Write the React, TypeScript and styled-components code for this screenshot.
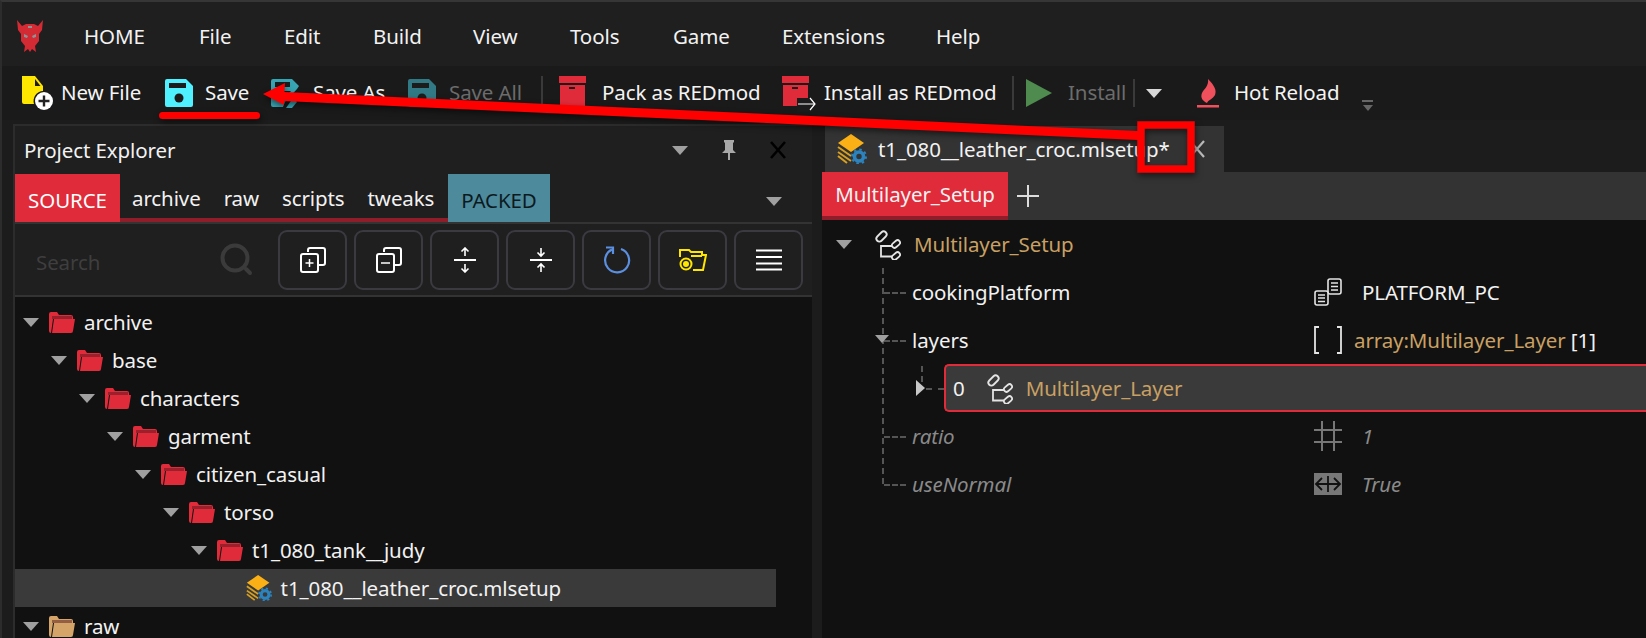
import styled, { createGlobalStyle } from 'styled-components';

const GlobalStyle = createGlobalStyle`
  html, body {
    margin: 0;
    padding: 0;
    background: #1c1c1c;
    overflow: hidden;
  }
  * {
    box-sizing: border-box;
  }
`;

const RED = '#e02b3a';
const TAN = '#c9a063';

const DevilLogo = () => (
  <svg width="28" height="34" viewBox="0 0 28 34">
    <path
      fill="#d42a33"
      d="M1 1 L6 7 L10 5 L18 5 L22 7 L27 1 L26 11 L23 15 L23 22 L19 27 L20 33 L16 30 L14 33 L12 30 L8 33 L9 27 L5 22 L5 15 L2 11 Z"
    />
    <path fill="#8c9498" d="M8 15 L12 17 L11 19 L8 18 Z M20 15 L16 17 L17 19 L20 18 Z M12 7 h4 v2 h-4 Z" />
  </svg>
);

const NewFileIcon = () => (
  <svg width="32" height="34" viewBox="0 0 32 34">
    <path fill="#ffe600" d="M1 0 H14 L22 10 V15 A10 10 0 0 0 13 28 H3 Q1 28 1 26 Z" />
    <path fill="#1c1c1c" d="M14 3 L19.5 10 H14 Z" />
    <circle cx="23" cy="25" r="9" fill="#fff" />
    <path stroke="#222" strokeWidth="2.4" d="M23 19.5 V30.5 M17.5 25 H28.5" />
  </svg>
);

const SaveIcon = ({ dim = false }: { dim?: boolean }) => (
  <svg width="28" height="28" viewBox="0 0 28 28">
    <path fill={dim ? '#317a85' : '#4ff0ff'} d="M2 0 H21 L28 7 V26 Q28 28 26 28 H2 Q0 28 0 26 V2 Q0 0 2 0 Z" />
    <rect x="4" y="4" width="17" height="5" fill="#1c1c1c" />
    <circle cx="14" cy="19" r="4.5" fill="#1c1c1c" />
  </svg>
);

const SaveAsIcon = () => (
  <svg width="28" height="30" viewBox="0 0 28 30">
    <path fill="#37a5b3" d="M2 1 H21 L28 8 L26 11 L14 24 L12 29 H2 Q0 29 0 27 V3 Q0 1 2 1 Z" />
    <rect x="4" y="4" width="15" height="5" fill="#1c1c1c" />
    <path fill="#1c1c1c" d="M5 13 H20 L11 23 H5 Z" />
    <path fill="#37a5b3" d="M22 20 L26 24 L21 30 L15 30 Z" />
  </svg>
);

const BoxIcon = ({ arrow = false }: { arrow?: boolean }) => (
  <svg width="30" height="34" viewBox="0 0 30 34" overflow="visible">
    <rect x="1" y="0" width="27" height="7" fill={RED} />
    <rect x="2" y="9" width="25" height="21" fill={RED} />
    <rect x="11" y="11" width="6" height="2" fill="#1c1c1c" />
    {arrow && (
      <>
        <path fill="#1c1c1c" d="M16 22 H32 V36 H16 Z" />
        <path stroke="#fff" strokeWidth="1.2" fill="none" d="M17 28 H34 M29 22 L34 28 L29 34" />
      </>
    )}
  </svg>
);

const PlayIcon = () => (
  <svg width="26" height="28" viewBox="0 0 26 28">
    <path fill="#4f8a4f" d="M0 0 L26 14 L0 28 Z" />
  </svg>
);

const FlameIcon = () => (
  <svg width="22" height="30" viewBox="0 0 22 30">
    <path fill="#f0505c" d="M11 1 C17 7 20 12 18 17 C16 21 11 22 10 25 C6 23 3 20 5 15 C7 11 12 8 11 1 Z" />
    <rect x="0" y="27" width="22" height="2.5" fill="#f0505c" />
  </svg>
);

const Caret = styled.span<{ $size?: number; $color?: string }>`
  display: inline-block;
  width: 0;
  height: 0;
  border-left: ${(p) => p.$size ?? 8}px solid transparent;
  border-right: ${(p) => p.$size ?? 8}px solid transparent;
  border-top: ${(p) => (p.$size ?? 8) * 1.2}px solid ${(p) => p.$color ?? '#a0a0a0'};
  flex: none;
`;

const PinIcon = () => (
  <svg width="16" height="20" viewBox="0 0 16 20">
    <path fill="#a8a8a8" d="M3 0 H13 V2 L12 3 V10 L15 13 H9 V20 H7 V13 H1 L4 10 V3 L3 2 Z" />
  </svg>
);

const CrossIcon = ({ color, weight = 2.2 }: { color: string; weight?: number }) => (
  <svg width="16" height="18" viewBox="0 0 16 18">
    <path stroke={color} strokeWidth={weight} d="M1 1 L15 17 M15 1 L1 17" />
  </svg>
);

const MagnifierIcon = () => (
  <svg width="34" height="34" viewBox="0 0 34 34">
    <circle cx="15" cy="15" r="12.5" fill="none" stroke="#3b3b3b" strokeWidth="4" />
    <path stroke="#3b3b3b" strokeWidth="4" strokeLinecap="round" d="M26 26 L30 30" />
  </svg>
);

const StackIcon = ({ minus = false }: { minus?: boolean }) => (
  <svg width="26" height="26" viewBox="0 0 26 26" fill="none" stroke="#fff" strokeWidth="2">
    <path d="M8 5 V3 Q8 1 10 1 H23 Q25 1 25 3 V16 Q25 18 23 18 H19" />
    <rect x="1" y="7" width="17" height="18" rx="2" />
    <path strokeWidth="1.5" d={minus ? 'M5 16 H14' : 'M5.5 16 H13.5 M9.5 12 V20'} />
  </svg>
);

const SpreadIcon = ({ inward = false }: { inward?: boolean }) => (
  <svg width="24" height="26" viewBox="0 0 24 26" fill="none" stroke="#fff" strokeWidth="1.6">
    <path strokeWidth="2" d="M1 13 H23" />
    {inward ? (
      <path d="M12 1 V9 M8.5 5.5 L12 9 L15.5 5.5 M12 25 V17 M8.5 20.5 L12 17 L15.5 20.5" />
    ) : (
      <path d="M12 9 V1 M8.5 4.5 L12 1 L15.5 4.5 M12 17 V25 M8.5 21.5 L12 25 L15.5 21.5" />
    )}
  </svg>
);

const RefreshIcon = () => (
  <svg width="28" height="28" viewBox="0 0 28 28" fill="none" stroke="#5b8fe0" strokeWidth="2.2">
    <path d="M9 3.5 A12 12 0 1 0 18 3" />
    <path d="M3 1.5 H10 V8" />
  </svg>
);

const FolderCamIcon = () => (
  <svg width="28" height="24" viewBox="0 0 28 24" fill="none" stroke="#ffe600" strokeWidth="2">
    <path d="M1 9 V2 H10 L12 4 H23 V7 H27 L24 22 H14" />
    <path d="M12 8 H23" />
    <circle cx="7" cy="16" r="5.5" />
    <circle cx="7" cy="16" r="2" fill="#ffe600" />
  </svg>
);

const MenuLinesIcon = () => (
  <svg width="26" height="22" viewBox="0 0 26 22" fill="none" stroke="#fff" strokeWidth="2.2">
    <path d="M0 1.5 H26 M0 8 H26 M0 14.5 H26 M0 20.5 H26" />
  </svg>
);

const FolderIcon = ({ color }: { color: string }) => (
  <svg width="26" height="21" viewBox="0 0 26 21">
    <path fill={color} d="M2 0 H8 L10 3 H22 Q24 3 24 5 V7 H4 L2 21 Q0 21 0 19 V2 Q0 0 2 0 Z" />
    <path fill="#55161b" opacity="0.5" d="M3 4 H23 V7 H3 Z" />
    <path fill={color} d="M5 7 H26 L24 19 Q24 21 22 21 H3 Z" />
  </svg>
);

const MlsetupIcon = ({ size = 30 }: { size?: number }) => (
  <svg width={size} height={size} viewBox="0 0 30 30">
    <path fill="#fbb116" d="M14 0 L27 9 L14 18 L1 9 Z" />
    <path fill="none" stroke="#d9a01f" strokeWidth="2" d="M1 13 L14 22 M1 18 L14 27 M1 22 L10 29" />
    <circle cx="22" cy="22.500" r="4.500" fill="none" stroke="#2c83bd" strokeWidth="3.600" />
    <circle cx="22" cy="22.500" r="7" fill="none" stroke="#2c83bd" strokeWidth="2" strokeDasharray="2.500 3" />
  </svg>
);

const StructIcon = () => (
  <svg width="28" height="32" viewBox="0 0 28 32" fill="none" stroke="#e4e4e4" strokeWidth="1.8">
    <rect x="2.500" y="5.500" width="12" height="6" rx="3" transform="rotate(-45 8.500 8.500)" />
    <rect x="18.500" y="13.500" width="9" height="5" rx="2.500" transform="rotate(-40 23 16)" />
    <rect x="18.500" y="25.500" width="9" height="5" rx="2.500" transform="rotate(-40 23 28)" />
    <path d="M19 18 H8 V28.500 H19" />
  </svg>
);

const EnumIcon = () => (
  <svg width="28" height="28" viewBox="0 0 28 28" fill="none" stroke="#e4e4e4" strokeWidth="1.6">
    <rect x="14" y="1" width="13" height="15" rx="2" />
    <path d="M17 5 H24 M17 8.5 H24 M17 12 H24" />
    <rect x="1" y="13" width="13" height="14" rx="2" fill="#111" />
    <path d="M4 17 H11 M4 20 H11 M4 23.5 H11" />
  </svg>
);

const BracketsIcon = () => (
  <svg width="28" height="28" viewBox="0 0 28 28" fill="none" stroke="#e4e4e4" strokeWidth="1.8">
    <path d="M5 1 H1 V27 H5 M23 1 H27 V27 H23" />
  </svg>
);

const HashIcon = () => (
  <svg width="28" height="30" viewBox="0 0 28 30" fill="none" stroke="#777" strokeWidth="2">
    <path d="M8 0 V30 M20 0 V30 M0 9 H28 M0 21 H28" />
  </svg>
);

const BoolIcon = () => (
  <svg width="28" height="22" viewBox="0 0 28 22">
    <rect width="28" height="22" fill="#777" />
    <path fill="none" stroke="#111" strokeWidth="1.8" d="M2 11 H26 M8 5 L2 11 L8 17 M20 5 L26 11 L20 17 M14 3 V19" />
  </svg>
);

const Window = styled.div`
  position: relative;
  width: 1646px;
  height: 638px;
  display: flex;
  flex-direction: column;
  overflow: hidden;
  background: #1c1c1c;
  border-top: 2px solid #363636;
  border-left: 2px solid #2c2c2c;
  color: #f2f2f2;
  font-family: 'Noto Sans', 'Open Sans', sans-serif;
  font-size: 20.5px;
  letter-spacing: -0.1px;
`;

const MenuBar = styled.div`
  height: 64px;
  flex: none;
  display: flex;
  align-items: center;
  padding-left: 14px;
  padding-top: 3px;
  background: #1f1f1f;
`;

const LogoSlot = styled.div`
  width: 68px;
  display: flex;
`;

const MenuItem = styled.div<{ $w: number }>`
  width: ${(p) => p.$w}px;
  white-space: nowrap;
`;

const ToolBar = styled.div`
  height: 54px;
  flex: none;
  display: flex;
  align-items: center;
  padding-left: 19px;
  background: #1a1a1a;
`;

const ToolItem = styled.div<{ $w: number; $gap: number; $dim?: boolean; $ml?: number }>`
  width: ${(p) => p.$w}px;
  margin-left: ${(p) => p.$ml ?? 0}px;
  flex: none;
  display: flex;
  align-items: center;
  gap: ${(p) => p.$gap}px;
  white-space: nowrap;
  color: ${(p) => (p.$dim ? '#6c6c6c' : '#f4f4f4')};
`;

const ToolLabel = styled.span`
  position: relative;
  top: -1px;
`;

const ToolSep = styled.div<{ $h?: number; $mr: number }>`
  width: 2px;
  height: ${(p) => p.$h ?? 34}px;
  background: #3a3a3a;
  flex: none;
  margin-right: ${(p) => p.$mr}px;
`;

const Overflow = styled.div`
  display: flex;
  flex-direction: column;
  align-items: center;
  gap: 3px;
  margin-top: 24px;
  &::before {
    content: '';
    width: 11px;
    height: 2px;
    background: #666;
  }
`;

const Main = styled.div`
  flex: 1;
  min-height: 0;
  display: flex;
  padding-top: 4px;
`;

const LeftPanel = styled.div`
  width: 799px;
  margin-left: 11px;
  flex: none;
  display: flex;
  flex-direction: column;
  background: #1f1f1f;
  border-top: 2px solid #2c2c2c;
  border-left: 2px solid #2c2c2c;
`;

const PanelHeader = styled.div`
  height: 48px;
  flex: none;
  display: flex;
  align-items: center;
  padding: 0 26px 0 9px;
`;

const PanelTitle = styled.div`
  flex: 1;
`;

const HeaderTools = styled.div`
  display: flex;
  align-items: center;
  gap: 33px;
`;

const TabStrip = styled.div`
  height: 48px;
  flex: none;
  display: flex;
  align-items: stretch;
  position: relative;
  padding-right: 30px;
`;

const KindTab = styled.div<{ $bg: string; $color: string; $w: number }>`
  width: ${(p) => p.$w}px;
  display: flex;
  align-items: center;
  justify-content: center;
  padding-top: 3px;
  background: ${(p) => p.$bg};
  color: ${(p) => p.$color};
`;

const SubTabs = styled.div`
  width: 328px;
  display: flex;
  align-items: center;
  gap: 23px;
  padding: 3px 0 0 12px;
  border-bottom: 4px solid #8f1d2a;
`;

const StripCaret = styled.div`
  margin-left: auto;
  align-self: center;
`;

const SearchRow = styled.div`
  height: 75px;
  flex: none;
  display: flex;
  align-items: center;
  gap: 7px;
  padding-left: 21px;
  border-top: 2px solid #333;
  border-bottom: 2px solid #333;
`;

const SearchBox = styled.div`
  width: 235px;
  display: flex;
  align-items: center;
  justify-content: space-between;
  padding-right: 17px;
  color: #3e3e3e;
`;

const SearchHint = styled.span`
  position: relative;
  top: 2px;
`;

const ToolButton = styled.div`
  width: 69px;
  height: 60px;
  flex: none;
  display: flex;
  align-items: center;
  justify-content: center;
  border: 2px solid #3a3a40;
  border-radius: 9px;
`;

const Tree = styled.div`
  flex: 1;
  min-height: 0;
  overflow: hidden;
  background: #111;
  padding-top: 6px;
`;

const TreeRow = styled.div<{ $depth: number; $selected?: boolean }>`
  height: 38px;
  width: 761px;
  display: flex;
  align-items: center;
  gap: 9px;
  padding-left: ${(p) => 8 + p.$depth * 28}px;
  background: ${(p) => (p.$selected ? '#3a3a3a' : 'transparent')};
  white-space: nowrap;
  line-height: 1;
`;

const RowCaret = styled.div`
  display: flex;
  margin-right: 1px;
`;

const RightPanel = styled.div`
  flex: 1;
  min-width: 0;
  margin-left: 10px;
  display: flex;
  flex-direction: column;
`;

const DocTabs = styled.div`
  height: 48px;
  flex: none;
  display: flex;
  align-items: flex-end;
  padding-left: 3px;
`;

const DocTab = styled.div`
  width: 399px;
  height: 46px;
  display: flex;
  align-items: center;
  gap: 11px;
  padding-left: 12px;
  background: #333;
  white-space: nowrap;
`;

const DocClose = styled.div`
  margin-left: 8px;
  display: flex;
`;

const SubBar = styled.div`
  height: 48px;
  flex: none;
  display: flex;
  background: #333;
`;

const SubTab = styled.div`
  width: 186px;
  display: flex;
  align-items: center;
  justify-content: center;
  background: ${RED};
  border-bottom: 4px solid #8f1d2a;
`;

const PlusIcon = styled.div`
  width: 22px;
  height: 22px;
  margin: 13px 0 0 9px;
  background:
    linear-gradient(#ddd, #ddd) center / 100% 2px no-repeat,
    linear-gradient(#ddd, #ddd) center / 2px 100% no-repeat;
`;

const PropGrid = styled.div`
  flex: 1;
  position: relative;
  background: #111;
`;

const PropRow = styled.div`
  height: 48px;
  display: grid;
  grid-template-columns: 492px 1fr;
  align-items: center;
`;

const NameCell = styled.div<{ $pad: number; $muted?: boolean }>`
  display: flex;
  align-items: center;
  gap: 13px;
  padding-left: ${(p) => p.$pad}px;
  font-style: ${(p) => (p.$muted ? 'italic' : 'normal')};
  color: ${(p) => (p.$muted ? '#8a8a8a' : '#f2f2f2')};
`;

const ValueCell = styled.div<{ $muted?: boolean; $gap?: number }>`
  display: flex;
  align-items: center;
  gap: ${(p) => p.$gap ?? 20}px;
  font-style: ${(p) => (p.$muted ? 'italic' : 'normal')};
  color: ${(p) => (p.$muted ? '#8a8a8a' : '#f2f2f2')};
`;

const Tan = styled.span`
  color: ${TAN};
`;

const ChildRow = styled.div`
  position: relative;
  height: 48px;
  margin-left: 122px;
  display: flex;
  align-items: center;
  gap: 20px;
  padding-left: 7px;
  background: #3a3a3a;
  border: 2px solid ${RED};
  border-right: 0;
  border-radius: 5px 0 0 5px;
`;

const ChildLabel = styled.div`
  display: flex;
  align-items: center;
  gap: 13px;
`;

const DotsV = styled.div<{ $h: number; $left: number; $top: number }>`
  position: absolute;
  left: ${(p) => p.$left}px;
  top: ${(p) => p.$top}px;
  height: ${(p) => p.$h}px;
  border-left: 2px dashed #555;
`;

const DotsH = styled.div<{ $w: number; $left: number; $top: number }>`
  position: absolute;
  left: ${(p) => p.$left}px;
  top: ${(p) => p.$top}px;
  width: ${(p) => p.$w}px;
  border-top: 2px dashed #555;
`;

const SideCaret = styled.div`
  position: absolute;
  left: 94px;
  top: 160px;
  width: 0;
  height: 0;
  border-top: 8px solid transparent;
  border-bottom: 8px solid transparent;
  border-left: 9px solid #c8c8c8;
`;

const DownCaret = styled.div`
  position: absolute;
  display: flex;
  left: 53px;
  top: 115px;
`;

const RootCaret = styled.div`
  display: flex;
  margin-right: 8px;
`;

const Annotation = styled.svg`
  position: absolute;
  left: -2px;
  top: -2px;
  pointer-events: none;
  filter: drop-shadow(1px 3px 3px rgba(0, 0, 0, 0.55));
`;

const treeFolders = [
  { name: 'archive', depth: 0 },
  { name: 'base', depth: 1 },
  { name: 'characters', depth: 2 },
  { name: 'garment', depth: 3 },
  { name: 'citizen_casual', depth: 4 },
  { name: 'torso', depth: 5 },
  { name: 't1_080_tank__judy', depth: 6 },
];

const App = () => {
  return (
    <>
      <GlobalStyle />
      <Window>
        <MenuBar>
          <LogoSlot>
            <DevilLogo />
          </LogoSlot>
          <MenuItem $w={115}>HOME</MenuItem>
          <MenuItem $w={85}>File</MenuItem>
          <MenuItem $w={89}>Edit</MenuItem>
          <MenuItem $w={100}>Build</MenuItem>
          <MenuItem $w={97}>View</MenuItem>
          <MenuItem $w={103}>Tools</MenuItem>
          <MenuItem $w={109}>Game</MenuItem>
          <MenuItem $w={154}>Extensions</MenuItem>
          <MenuItem $w={60}>Help</MenuItem>
        </MenuBar>
        <ToolBar>
          <ToolItem $w={144} $gap={8}>
            <NewFileIcon />
            <ToolLabel>New File</ToolLabel>
          </ToolItem>
          <ToolItem $w={106} $gap={12}>
            <SaveIcon />
            <ToolLabel>Save</ToolLabel>
          </ToolItem>
          <ToolItem $w={137} $gap={14}>
            <SaveAsIcon />
            <ToolLabel>Save As</ToolLabel>
          </ToolItem>
          <ToolItem $w={133} $gap={13} $dim>
            <SaveIcon dim />
            <ToolLabel>Save All</ToolLabel>
          </ToolItem>
          <ToolSep $mr={15} />
          <ToolItem $w={223} $gap={14}>
            <BoxIcon />
            <ToolLabel>Pack as REDmod</ToolLabel>
          </ToolItem>
          <ToolItem $w={231} $gap={13}>
            <BoxIcon arrow />
            <ToolLabel>Install as REDmod</ToolLabel>
          </ToolItem>
          <ToolSep $mr={12} />
          <ToolItem $w={107} $gap={16} $dim>
            <PlayIcon />
            <ToolLabel>Install</ToolLabel>
          </ToolItem>
          <ToolSep $h={28} $mr={11} />
          <Caret $size={8} $color="#d8d8d8" />
          <ToolItem $w={165} $gap={15} $ml={35}>
            <FlameIcon />
            <ToolLabel>Hot Reload</ToolLabel>
          </ToolItem>
          <Overflow>
            <Caret $size={5.5} $color="#666" />
          </Overflow>
        </ToolBar>
        <Main>
          <LeftPanel>
            <PanelHeader>
              <PanelTitle>Project Explorer</PanelTitle>
              <HeaderTools>
                <Caret $size={8} />
                <PinIcon />
                <CrossIcon color="#000" weight={2.6} />
              </HeaderTools>
            </PanelHeader>
            <TabStrip>
              <KindTab $bg={RED} $color="#fff" $w={105}>
                SOURCE
              </KindTab>
              <SubTabs>
                <span>archive</span>
                <span>raw</span>
                <span>scripts</span>
                <span>tweaks</span>
              </SubTabs>
              <KindTab $bg="#4d8a9c" $color="#0c1a1e" $w={102}>
                PACKED
              </KindTab>
              <StripCaret>
                <Caret $size={8} />
              </StripCaret>
            </TabStrip>
            <SearchRow>
              <SearchBox>
                <SearchHint>Search</SearchHint>
                <MagnifierIcon />
              </SearchBox>
              <ToolButton>
                <StackIcon />
              </ToolButton>
              <ToolButton>
                <StackIcon minus />
              </ToolButton>
              <ToolButton>
                <SpreadIcon />
              </ToolButton>
              <ToolButton>
                <SpreadIcon inward />
              </ToolButton>
              <ToolButton>
                <RefreshIcon />
              </ToolButton>
              <ToolButton>
                <FolderCamIcon />
              </ToolButton>
              <ToolButton>
                <MenuLinesIcon />
              </ToolButton>
            </SearchRow>
            <Tree>
              {treeFolders.map((f) => (
                <TreeRow key={f.name} $depth={f.depth}>
                  <RowCaret>
                    <Caret $size={8} />
                  </RowCaret>
                  <FolderIcon color={RED} />
                  {f.name}
                </TreeRow>
              ))}
              <TreeRow $depth={7.95} $selected>
                <MlsetupIcon size={26} />
                t1_080__leather_croc.mlsetup
              </TreeRow>
              <TreeRow $depth={0}>
                <RowCaret>
                  <Caret $size={8} />
                </RowCaret>
                <FolderIcon color="#d5a468" />
                raw
              </TreeRow>
            </Tree>
          </LeftPanel>
          <RightPanel>
            <DocTabs>
              <DocTab>
                <MlsetupIcon />
                t1_080__leather_croc.mlsetup*
                <DocClose>
                  <CrossIcon color="#bbb" />
                </DocClose>
              </DocTab>
            </DocTabs>
            <SubBar>
              <SubTab>Multilayer_Setup</SubTab>
              <PlusIcon />
            </SubBar>
            <PropGrid>
              <DotsV $left={60} $top={48} $h={216} />
              <DotsH $left={62} $top={72} $w={22} />
              <DotsH $left={62} $top={120} $w={22} />
              <DotsH $left={62} $top={216} $w={22} />
              <DotsH $left={62} $top={264} $w={22} />
              <DotsV $left={99} $top={146} $h={16} />
              <DotsH $left={104} $top={168} $w={18} />
              <DownCaret>
                <Caret $size={7} />
              </DownCaret>
              <SideCaret />
              <PropRow>
                <NameCell $pad={14}>
                  <RootCaret>
                    <Caret $size={8} />
                  </RootCaret>
                  <StructIcon />
                  <Tan>Multilayer_Setup</Tan>
                </NameCell>
              </PropRow>
              <PropRow>
                <NameCell $pad={90}>cookingPlatform</NameCell>
                <ValueCell>
                  <EnumIcon />
                  PLATFORM_PC
                </ValueCell>
              </PropRow>
              <PropRow>
                <NameCell $pad={90}>layers</NameCell>
                <ValueCell $gap={12}>
                  <BracketsIcon />
                  <span>
                    <Tan>array:Multilayer_Layer</Tan> [1]
                  </span>
                </ValueCell>
              </PropRow>
              <ChildRow>
                0
                <ChildLabel>
                  <StructIcon />
                  <Tan>Multilayer_Layer</Tan>
                </ChildLabel>
              </ChildRow>
              <PropRow>
                <NameCell $pad={90} $muted>
                  ratio
                </NameCell>
                <ValueCell $muted>
                  <HashIcon />1
                </ValueCell>
              </PropRow>
              <PropRow>
                <NameCell $pad={90} $muted>
                  useNormal
                </NameCell>
                <ValueCell $muted>
                  <BoolIcon />
                  True
                </ValueCell>
              </PropRow>
            </PropGrid>
          </RightPanel>
        </Main>
        <Annotation width="1646" height="638" viewBox="0 0 1646 638">
          <path fill="#f00" d="M263 94 L285 83 L284.500 92 L1138 131 L1138 140 L284 101 L284 105 Z" />
          <rect x="1141" y="125" width="50" height="44" fill="none" stroke="#f00" strokeWidth="7.500" />
          <rect x="159" y="112" width="101" height="7" rx="3.500" fill="#f00" />
        </Annotation>
      </Window>
    </>
  );
};

export default App;
